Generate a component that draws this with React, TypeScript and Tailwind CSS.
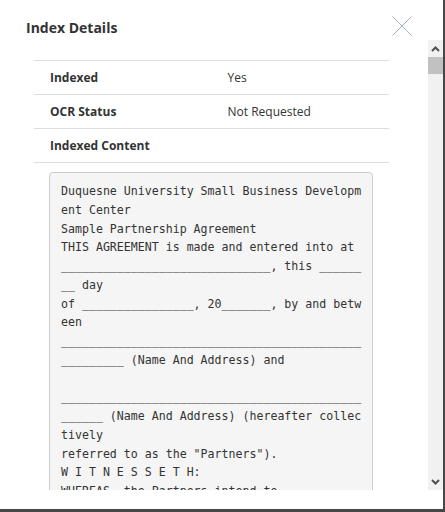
import React from 'react';

const rows = [
  { label: 'Indexed', value: 'Yes' },
  { label: 'OCR Status', value: 'Not Requested' },
  { label: 'Indexed Content', value: '' },
];

const content = [
  'Duquesne University Small Business Developm',
  'ent Center',
  'Sample Partnership Agreement',
  'THIS AGREEMENT is made and entered into at',
  '______________________________, this ______',
  '__ day',
  'of ________________, 20_______, by and betw',
  'een',
  '___________________________________________',
  '_________ (Name And Address) and',
  '',
  '___________________________________________',
  '______ (Name And Address) (hereafter collec',
  'tively',
  'referred to as the "Partners").',
  'W I T N E S S E T H:',
  'WHEREAS, the Partners intend to',
  'form a partnership for the purpose of',
].join('\n');

function Chevron({ up }: { up?: boolean }) {
  return (
    <svg width="9" height="6" viewBox="0 0 9 6" className="block">
      <path
        d={up ? 'M1 5 L4.5 1.5 L8 5' : 'M1 1 L4.5 4.5 L8 1'}
        fill="none"
        stroke="#505050"
        strokeWidth="2"
      />
    </svg>
  );
}

export default function App() {
  return (
    <div
      className="w-[445px] h-[512px] bg-white flex flex-col border-r-2 border-b-[3px] border-[#474747] text-[#333] overflow-hidden"
      style={{ fontFamily: '"Open Sans", "Noto Sans", sans-serif' }}
    >
      <div className="h-[40px] shrink-0 flex items-start justify-between pl-[26px] pr-[31px]">
        <h4 className="mt-[16px] text-[14px] leading-[24px] font-bold text-[#333]">Index Details</h4>
        <button className="mt-[16px] w-[20px] h-[20px]">
          <svg width="20" height="20" viewBox="0 0 20 20" className="block">
            <path d="M0.5 0.5 L19.5 19.5 M19.5 0.5 L0.5 19.5" stroke="#a6b5c3" strokeWidth="1" fill="none" />
          </svg>
        </button>
      </div>

      <div className="h-[450px] shrink-0 flex">
        <div className="flex-1 overflow-hidden pl-[34px] pr-[39px] pt-[20px]">
          <div className="border-b border-[#ddd]">
            {rows.map((r) => (
              <div key={r.label} className="h-[34px] border-t border-[#ddd] flex items-center text-[12px]">
                <div className="w-1/2 pl-[16px] font-bold">{r.label}</div>
                <div className="w-1/2 pl-[16px]">{r.value}</div>
              </div>
            ))}
          </div>
          <div className="pt-[9px] pl-[15px] pr-[16px]">
            <pre
              className="border border-[#ccc] rounded-[4px] bg-[#f5f5f5] pl-[11px] pr-[6px] pt-[9px] pb-[10px] text-[11.6px] leading-[18.75px] text-[#333] whitespace-pre"
              style={{ fontFamily: '"DejaVu Sans Mono", "Liberation Mono", monospace' }}
            >
              {content}
            </pre>
          </div>
        </div>

        <div className="w-[15px] shrink-0 bg-[#f1f1f1] flex flex-col">
          <div className="h-[17px] flex items-center justify-center">
            <Chevron up />
          </div>
          <div className="h-[17px] bg-[#c1c1c1]" />
          <div className="flex-1" />
          <div className="h-[17px] flex items-center justify-center">
            <Chevron />
          </div>
        </div>
      </div>

      <div className="flex-1" />
    </div>
  );
}
